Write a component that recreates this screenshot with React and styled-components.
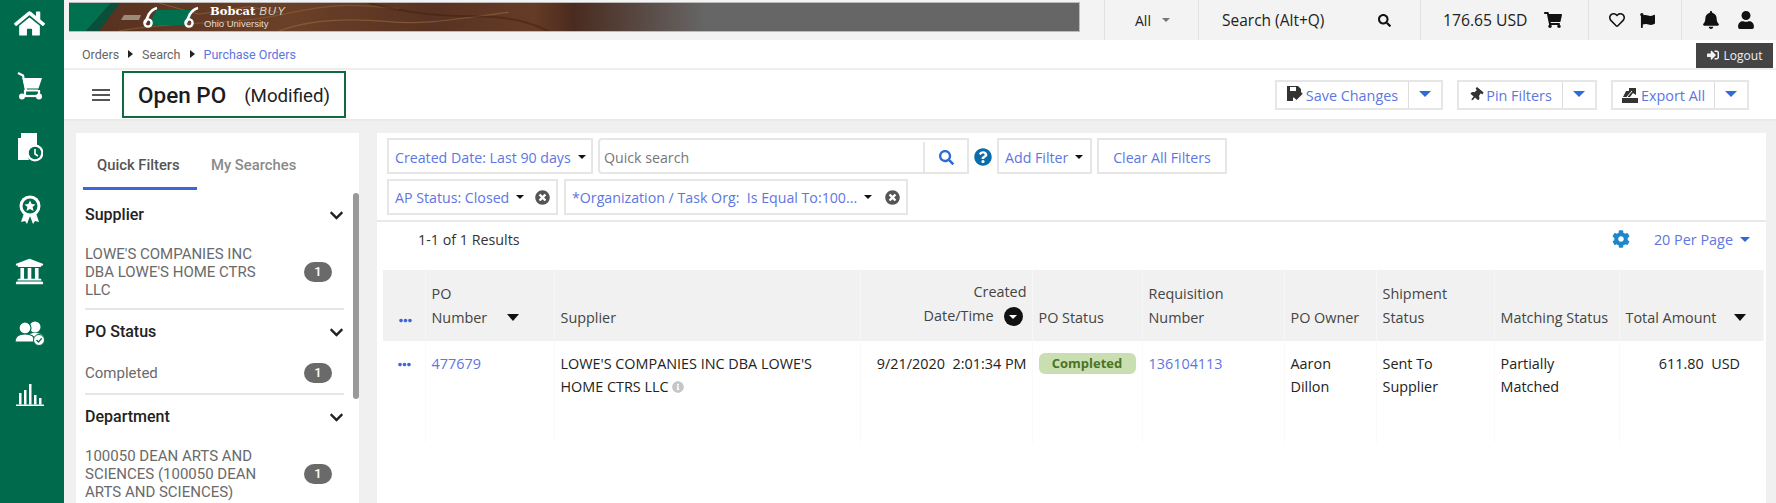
import React from 'react';
import styled, { createGlobalStyle } from 'styled-components';
import {
  FaHome,
  FaUniversity,
  FaSearch,
  FaShoppingCart,
  FaRegHeart,
  FaFlag,
  FaBell,
  FaUser,
  FaSignInAlt,
  FaThumbtack,
  FaCog,
  FaQuestionCircle,
  FaTimesCircle,
  FaInfoCircle,
  FaChevronDown,
  FaEllipsisH,
} from 'react-icons/fa';

const LINK = '#5d76e2';
const GREEN = '#006a4d';

const GlobalStyle = createGlobalStyle`
  html, body {
    margin: 0;
    height: 100%;
    overflow: hidden;
    background: #f0f0f0;
    font-family: "Open Sans", "Liberation Sans", sans-serif;
    color: #333;
  }
  * { box-sizing: border-box; }
`;

const CartIcon = () => (
  <svg width='25' height='29' viewBox='0 0 25 29'>
    <path d='M1 2l5 2.5 3 15h12' stroke='#fff' strokeWidth='2.2' fill='none' />
    <path d='M5.5 7H25l-3.5 10.5H8z' fill='#fff' />
    <path d='M8 19l0 7M22 19l0 7' stroke='#fff' strokeWidth='2.2' />
    <path d='M5 25h18' stroke='#fff' strokeWidth='2.2' />
    <circle cx='5' cy='25.5' r='3' fill='#fff' />
    <circle cx='22' cy='25.5' r='3' fill='#fff' />
  </svg>
);

const DocClockIcon = () => (
  <svg width='26' height='29' viewBox='0 0 26 29'>
    <path d='M4 0h16v14a9 9 0 0 0-8 13H1V5h3z' fill='#fff' />
    <circle cx='18' cy='20' r='8.5' fill='#fff' />
    <circle cx='18' cy='20' r='6.2' fill={GREEN} />
    <path d='M18 16v5l3 2' stroke='#fff' strokeWidth='1.6' fill='none' />
  </svg>
);

const AwardIcon = () => (
  <svg width='22' height='29' viewBox='0 0 22 29'>
    <path d='M5 18l-3 9 4-1 2 3 3-8 3 8 2-3 4 1-3-9z' fill='#fff' />
    <circle cx='11' cy='11' r='10.5' fill='#fff' />
    <circle cx='11' cy='11' r='7.5' fill={GREEN} />
    <path d='M11 5.5l1.7 3.6 3.8.4-2.9 2.6.9 3.9-3.5-2-3.5 2 .9-3.9-2.9-2.6 3.8-.4z' fill='#fff' />
  </svg>
);

const UsersCheckIcon = () => (
  <svg width='30' height='26' viewBox='0 0 30 26'>
    <circle cx='20' cy='7' r='5.5' fill='#fff' />
    <path d='M11 20c0-5 4-7 9-7s9 2 9 6v1z' fill='#fff' />
    <circle cx='10' cy='8' r='6' fill='#fff' stroke={GREEN} strokeWidth='1.2' />
    <path d='M0 22c0-6 4-8 10-8s10 2 10 8z' fill='#fff' stroke={GREEN} strokeWidth='1.2' />
    <circle cx='24' cy='20' r='5.5' fill='#fff' stroke={GREEN} strokeWidth='1' />
    <path d='M21.5 20l2 2 3.2-3.6' stroke={GREEN} strokeWidth='1.4' fill='none' />
  </svg>
);

const BarsIcon = () => (
  <svg width='28' height='22' viewBox='0 0 28 22'>
    <path d='M0 20.5h28V22H0z' fill='#fff' />
    <path d='M3 9h2.5v11.5H3zM8 6h2.5v14.5H8zM13 0h2.5v20.5H13zM18 11h2.5v9.5H18zM23 14h2.5v6.5H23z' fill='#fff' />
  </svg>
);

const SaveIcon = () => (
  <svg width='16' height='17' viewBox='0 0 16 17'>
    <path d='M0 0h11l3 3v5l-5 5-2-2-1 1v3H0z' fill='#333' />
    <path d='M3 1h6v4H3z' fill='#fff' />
    <path d='M7 10l2.5 2.5L15 7' stroke='#333' strokeWidth='2' fill='none' />
  </svg>
);

const ExportIcon = () => (
  <svg width='16' height='17' viewBox='0 0 16 17'>
    <path d='M0 12h16v5H0z' fill='#333' />
    <path d='M1 11l3-6h3V2l7 0v7l-3-2-3 4z' fill='#333' />
    <path d='M5 11l5-6' stroke='#fff' strokeWidth='1' />
  </svg>
);

const BannerArt = () => (
  <ArtLayer viewBox='0 0 1011 30' preserveAspectRatio='none'>
    <path d='M50 30C110 18 160 25 215 12S290 2 330 6' stroke='#8a5a34' strokeWidth='1.4' fill='none' opacity='.65' />
    <path d='M210 30c30-12 70-14 110-10s70-4 120-10' stroke='#9a6a3c' strokeWidth='1.2' fill='none' opacity='.6' />
    <path d='M300 0c30 8 60 14 100 14s60 6 80 16' stroke='#3a1c10' strokeWidth='2' fill='none' opacity='.45' />
    <path d='M90 0l40 12 50-8 30 6' stroke='#a7773f' strokeWidth='1' fill='none' opacity='.55' />
    <path d='M0 0h42L17 30H0z' fill='#00704f' />
    <path d='M42 0h9L30 30H17z' fill='#0a4f3a' />
  </ArtLayer>
);

const BobcatMark = () => (
  <MarkSvg width='88' height='24' viewBox='0 0 88 24'>
    <path d='M3 10h17l-2 5H0z' fill='#9a8a78' />
    <path d='M35 5h38l-8 15H28z' fill='#00704f' />
    <path d='M36 3c-4 1-6 3-8 6l-4 9' stroke='#fff' strokeWidth='2.6' fill='none' />
    <circle cx='27' cy='18' r='3.6' stroke='#fff' strokeWidth='2.4' fill='none' />
    <path d='M77 3c-4 1-6 3-8 6l-4 9' stroke='#fff' strokeWidth='2.6' fill='none' />
    <circle cx='68' cy='18' r='3.6' stroke='#fff' strokeWidth='2.4' fill='none' />
  </MarkSvg>
);

const navIcons = [
  <FaHome key='home' size={31} />,
  <CartIcon key='cart' />,
  <DocClockIcon key='doc' />,
  <AwardIcon key='award' />,
  <FaUniversity key='bank' size={29} />,
  <UsersCheckIcon key='users' />,
  <BarsIcon key='bars' />,
];

const filterGroups = [
  { title: 'Supplier', lines: ["LOWE'S COMPANIES INC", "DBA LOWE'S HOME CTRS", 'LLC'] },
  { title: 'PO Status', lines: ['Completed'] },
  { title: 'Department', lines: ['100050 DEAN ARTS AND', 'SCIENCES (100050 DEAN', 'ARTS AND SCIENCES)'] },
];

const App = () => {
  return (
    <Page>
      <GlobalStyle />
      <Nav>
        {navIcons.map(icon => (
          <NavItem key={icon.key}>{icon}</NavItem>
        ))}
      </Nav>
      <Main>
        <TopBar>
          <Banner>
            <BannerArt />
            <BobcatMark />
            <BrandText>
              <BrandName>
                Bobcat <BrandBuy>BUY</BrandBuy>
              </BrandName>
              <BrandSub>Ohio University</BrandSub>
            </BrandText>
          </Banner>
          <TopSegment $w={94} $pad={30}>
            <AllLabel>All</AllLabel> <Caret $size={4} $color='#777' />
          </TopSegment>
          <TopSegment $w={222} $pad={23} $between>
            <SearchLabel>Search (Alt+Q)</SearchLabel>
            <SearchGlyph size={13} />
          </TopSegment>
          <TopSegment $w={168} $pad={22}>
            <TopAmount>176.65 USD</TopAmount>
            <FaShoppingCart size={18} />
          </TopSegment>
          <TopSegment $w={93} $pad={20} $gap={15}>
            <FaRegHeart size={16} />
            <FaFlag size={15} />
          </TopSegment>
          <TopSegment $w={95} $pad={20} $gap={17}>
            <FaBell size={18} />
            <FaUser size={18} />
          </TopSegment>
        </TopBar>

        <CrumbBar>
          <Crumbs>
            <span>Orders</span>
            <CrumbArrow />
            <span>Search</span>
            <CrumbArrow />
            <CrumbLink>Purchase Orders</CrumbLink>
          </Crumbs>
          <LogoutButton>
            <FaSignInAlt size={12} /> Logout
          </LogoutButton>
        </CrumbBar>

        <TitleBar>
          <TitleLeft>
            <Hamburger>
              <span />
              <span />
              <span />
            </Hamburger>
            <TitleBox>
              <Title>Open PO</Title>
              <Modified>(Modified)</Modified>
            </TitleBox>
          </TitleLeft>
          <Actions>
            <SplitButton>
              <SplitMain $w={132}>
                <SaveIcon />
                Save Changes
              </SplitMain>
              <SplitToggle><Caret $size={6} $color='#2d6bd6' /></SplitToggle>
            </SplitButton>
            <SplitButton>
              <SplitMain $w={104}>
                <PinIcon size={14} />
                Pin Filters
              </SplitMain>
              <SplitToggle><Caret $size={6} $color='#2d6bd6' /></SplitToggle>
            </SplitButton>
            <SplitButton>
              <SplitMain $w={102}>
                <ExportIcon />
                Export All
              </SplitMain>
              <SplitToggle><Caret $size={6} $color='#2d6bd6' /></SplitToggle>
            </SplitButton>
          </Actions>
        </TitleBar>

        <Content>
          <SidePanel>
            <Tabs>
              <Tab $active>Quick Filters</Tab>
              <Tab>My Searches</Tab>
            </Tabs>
            <ScrollThumb />
            {filterGroups.map(group => (
              <FilterGroup key={group.title}>
                <GroupHead>
                  {group.title}
                  <FaChevronDown size={15} color='#222' />
                </GroupHead>
                <GroupRow $single={group.lines.length === 1}>
                  <GroupText>
                    {group.lines.map(line => (
                      <div key={line}>{line}</div>
                    ))}
                  </GroupText>
                  <CountBadge>1</CountBadge>
                </GroupRow>
              </FilterGroup>
            ))}
          </SidePanel>

          <ResultsPanel>
            <FilterBar>
              <FilterRow $first>
                <FilterBox $w={206}>
                  Created Date: Last 90 days <Caret $size={4} $color='#111' />
                </FilterBox>
                <SearchBox>
                  <SearchText>Quick search</SearchText>
                  <SearchButton><FaSearch size={15} color='#2d6bd6' /></SearchButton>
                </SearchBox>
                <HelpIcon><FaQuestionCircle size={18} color='#0b6cab' /></HelpIcon>
                <FilterBox $w={95}>
                  Add Filter <Caret $size={4} $color='#111' />
                </FilterBox>
                <FilterBox $w={130} $center>Clear All Filters</FilterBox>
              </FilterRow>
              <FilterRow>
                <FilterBox $w={171}>
                  AP Status: Closed <Caret $size={4} $color='#111' />
                  <RemoveIcon><FaTimesCircle size={15} /></RemoveIcon>
                </FilterBox>
                <FilterBox $w={344}>
                  *Organization / Task Org:&nbsp; Is Equal To:100... <Caret $size={4} $color='#111' />
                  <RemoveIcon><FaTimesCircle size={15} /></RemoveIcon>
                </FilterBox>
              </FilterRow>
            </FilterBar>

            <ResultsBar>
              <span>1-1 of 1 Results</span>
              <PageTools>
                <FaCog size={18} color='#1d87c9' />
                <PerPage>
                  20 Per Page <Caret $size={5.5} $color='#2d6bd6' />
                </PerPage>
              </PageTools>
            </ResultsBar>

            <Table>
              <colgroup>
                {[42, 129, 306, 172, 110, 142, 92, 118, 125, 144].map((w, i) => (
                  <Col key={i} $w={w} />
                ))}
              </colgroup>
              <thead>
                <tr>
                  <Th><Dots><FaEllipsisH size={13} /></Dots></Th>
                  <Th>
                    PO
                    <br />
                    Number <SortCaret />
                  </Th>
                  <Th>Supplier</Th>
                  <Th $right>
                    Created
                    <DateLine>
                      Date/Time
                      <SortCircle><Caret $size={4.5} $color='#fff' /></SortCircle>
                    </DateLine>
                  </Th>
                  <Th>PO Status</Th>
                  <Th>Requisition<br />Number</Th>
                  <Th>PO Owner</Th>
                  <Th>Shipment<br />Status</Th>
                  <Th>Matching Status</Th>
                  <Th>Total Amount <TotalCaret /></Th>
                </tr>
              </thead>
              <tbody>
                <tr>
                  <Td><Dots><FaEllipsisH size={13} /></Dots></Td>
                  <Td><Link>477679</Link></Td>
                  <Td>
                    LOWE'S COMPANIES INC DBA LOWE'S
                    <br />
                    HOME CTRS LLC <FaInfoCircle size={12} color='#c6c6c6' />
                  </Td>
                  <Td $right>9/21/2020&nbsp; 2:01:34 PM</Td>
                  <Td><StatusPill>Completed</StatusPill></Td>
                  <Td><Link>136104113</Link></Td>
                  <Td>Aaron<br />Dillon</Td>
                  <Td>Sent To<br />Supplier</Td>
                  <Td>Partially<br />Matched</Td>
                  <AmountCell>611.80&nbsp; USD</AmountCell>
                </tr>
              </tbody>
            </Table>
          </ResultsPanel>
        </Content>
      </Main>
    </Page>
  );
};

const Page = styled.div`
  display: flex;
  width: 1776px;
  height: 503px;
  overflow: hidden;
`;

const Nav = styled.nav`
  flex: 0 0 64px;
  background: ${GREEN};
  color: #fff;
  display: flex;
  flex-direction: column;
  padding: 0 5px 0 0;
`;

const NavItem = styled.div`
  height: 62px;
  flex: none;
  display: flex;
  align-items: center;
  justify-content: center;
  &:first-child { margin-top: -8px; }
`;

const Main = styled.div`
  flex: 1;
  min-width: 0;
  display: flex;
  flex-direction: column;
`;

const TopBar = styled.header`
  height: 40px;
  flex: none;
  background: #f3f3f3;
  display: flex;
  padding-left: 5px;
  font-size: 13px;
  color: #333;
`;

const Banner = styled.div`
  position: relative;
  width: 1011px;
  height: 30px;
  margin: 2px 24px 0 0;
  flex: none;
  overflow: hidden;
  display: flex;
  align-items: center;
  gap: 8px;
  padding-left: 52px;
  border: 1px solid #bbb;
  border-left: none;
  background: linear-gradient(90deg, #55301f 0, #6a4028 22%, #583222 36%, #653b26 46%, #4a2b1f 50%, #666 63%, #666 100%);
`;

const ArtLayer = styled.svg`
  position: absolute;
  inset: 0;
  width: 100%;
  height: 100%;
`;

const MarkSvg = styled.svg`
  position: relative;
  flex: none;
`;

const BrandText = styled.div`
  position: relative;
  color: #fff;
  margin-left: -7px;
  line-height: 1;
`;

const BrandName = styled.div`
  font-family: "DejaVu Serif", serif;
  font-size: 11.5px;
  font-weight: 700;
`;

const BrandBuy = styled.span`
  font-family: "Liberation Sans", sans-serif;
  font-style: italic;
  font-weight: 400;
  letter-spacing: 1px;
  color: #d9d3cb;
`;

const BrandSub = styled.div`
  font-family: "Liberation Sans", sans-serif;
  font-size: 9.5px;
  margin: 1px 0 0 -6px;
  color: #e2ddd6;
`;

const TopSegment = styled.div`
  width: ${p => p.$w}px;
  flex: none;
  border-left: 1px solid #e2e2e2;
  padding: 0 ${p => p.$pad}px;
  display: flex;
  align-items: center;
  justify-content: ${p => (p.$between ? 'space-between' : 'flex-start')};
  gap: ${p => p.$gap || 8}px;
  color: #222;
  svg { color: #111; flex: none; }
`;

const AllLabel = styled.span`
  font-size: 14px;
`;

const SearchLabel = styled.span`
  font-size: 15.5px;
  white-space: nowrap;
`;

const SearchGlyph = styled(FaSearch)`
  margin-right: 6px;
`;

const TopAmount = styled.span`
  font-size: 15.7px;
  margin-right: 9px;
  white-space: nowrap;
`;

const Caret = styled.span`
  display: inline-block;
  flex: none;
  width: 0;
  height: 0;
  vertical-align: middle;
  border-left: ${p => p.$size}px solid transparent;
  border-right: ${p => p.$size}px solid transparent;
  border-top: ${p => p.$size}px solid ${p => p.$color};
  margin-left: 3px;
`;

const CrumbBar = styled.div`
  height: 30px;
  flex: none;
  background: #fff;
  border-bottom: 2px solid #eee;
  display: flex;
  align-items: center;
  justify-content: space-between;
  padding: 0 3px 0 18px;
`;

const Crumbs = styled.div`
  display: flex;
  align-items: center;
  gap: 9px;
  font-family: Roboto, sans-serif;
  font-size: 12.5px;
  color: #666;
`;

const CrumbArrow = styled.span`
  width: 0;
  height: 0;
  border-top: 4px solid transparent;
  border-bottom: 4px solid transparent;
  border-left: 5px solid #222;
`;

const CrumbLink = styled.span`
  color: ${LINK};
`;

const LogoutButton = styled.div`
  width: 77px;
  height: 25px;
  margin-top: 2px;
  background: #444;
  color: #f2f2f2;
  font-size: 12px;
  display: flex;
  align-items: center;
  justify-content: center;
  gap: 5px;
`;

const TitleBar = styled.div`
  height: 51px;
  flex: none;
  background: #fff;
  border-bottom: 2px solid #eaeaea;
  display: flex;
  align-items: center;
  justify-content: space-between;
  padding: 0 27px 0 28px;
`;

const TitleLeft = styled.div`
  display: flex;
  align-items: center;
  gap: 12px;
`;

const Hamburger = styled.div`
  width: 18px;
  display: flex;
  flex-direction: column;
  gap: 3px;
  span {
    height: 2px;
    background: #555;
  }
`;

const TitleBox = styled.div`
  width: 224px;
  height: 47px;
  border: 2px solid #0f6b3f;
  display: flex;
  align-items: center;
  padding-left: 14px;
  gap: 18px;
  font-family: Roboto, sans-serif;
`;

const Title = styled.h1`
  margin: 0;
  font-size: 22.5px;
  font-weight: 500;
  color: #1c1c1c;
`;

const Modified = styled.span`
  margin-top: 3px;
  font-size: 18.7px;
  color: #222;
`;

const Actions = styled.div`
  display: flex;
  gap: 14px;
`;

const SplitButton = styled.div`
  height: 30px;
  display: flex;
  border: 2px solid #e6e6e6;
  background: #fff;
`;

const SplitMain = styled.div`
  width: ${p => p.$w}px;
  display: flex;
  align-items: center;
  justify-content: center;
  gap: 3px;
  padding-top: 2px;
  font-size: 14.4px;
  color: ${LINK};
  white-space: nowrap;
  border-right: 1px solid #ddd;
  svg { flex: none; margin-top: -2px; }
`;

const PinIcon = styled(FaThumbtack)`
  color: #333;
  transform: rotate(40deg);
`;

const SplitToggle = styled.div`
  width: 32px;
  display: flex;
  align-items: center;
  justify-content: center;
  span { margin: -2px 0 0; }
`;

const Content = styled.div`
  flex: 1;
  min-height: 0;
  display: flex;
  gap: 18px;
  padding: 12px 10px 0 12px;
  background: #f0f0f0;
`;

const SidePanel = styled.aside`
  position: relative;
  flex: 0 0 283px;
  background: #fff;
  padding: 0 15px 0 8px;
  font-family: Roboto, sans-serif;
  overflow: hidden;
`;

const ScrollThumb = styled.div`
  position: absolute;
  right: 0;
  top: 60px;
  width: 6px;
  height: 206px;
  border-radius: 3px;
  background: #999;
`;

const Tabs = styled.div`
  display: flex;
  height: 57px;
  margin-left: -1px;
`;

const Tab = styled.div`
  width: ${p => (p.$active ? '114px' : 'auto')};
  padding: 23px 0 0 14px;
  font-size: 14.8px;
  font-weight: 500;
  color: ${p => (p.$active ? '#555' : '#8a8a8a')};
  border-bottom: ${p => (p.$active ? '3px solid #3d66d8' : 'none')};
`;

const FilterGroup = styled.section`
  margin-left: 1px;
  padding-top: 12px;
  border-bottom: 2px solid #e6e6e6;
  &:first-of-type { padding-top: 15px; }
`;

const GroupHead = styled.div`
  display: flex;
  align-items: center;
  justify-content: space-between;
  font-size: 16px;
  font-weight: 500;
  line-height: 20px;
  color: #222;
  height: 20px;
`;

const GroupRow = styled.div`
  display: flex;
  align-items: center;
  justify-content: space-between;
  padding: ${p => (p.$single ? '21px 12px 10px 0' : '20px 12px 9px 0')};
`;

const GroupText = styled.div`
  font-size: 15px;
  line-height: 18px;
  color: #6a6a6a;
  white-space: nowrap;
`;

const CountBadge = styled.div`
  width: 28px;
  height: 20px;
  border-radius: 10px;
  background: #6a6a6a;
  color: #fff;
  font-size: 13px;
  font-weight: 500;
  text-align: center;
  line-height: 20px;
`;

const ResultsPanel = styled.main`
  flex: 1;
  min-width: 0;
  background: #fff;
`;

const FilterBar = styled.div`
  padding: 5px 10px 5px;
  border-bottom: 2px solid #e8e8e8;
  display: flex;
  flex-direction: column;
  gap: 5px;
`;

const FilterRow = styled.div`
  display: flex;
  align-items: stretch;
  gap: ${p => (p.$first ? 5 : 6)}px;
  & > div { padding-top: ${p => (p.$first ? 2 : 0)}px; }
`;

const FilterBox = styled.div`
  width: ${p => p.$w}px;
  height: 36px;
  flex: none;
  display: flex;
  align-items: center;
  justify-content: ${p => (p.$center ? 'center' : 'flex-start')};
  gap: 4px;
  padding: 0 6px;
  border: 2px solid #e6e6e6;
  font-size: 14.2px;
  color: ${LINK};
  white-space: nowrap;
`;

const RemoveIcon = styled.span`
  display: flex;
  margin-left: auto;
  color: #555;
`;

const SearchBox = styled.div`
  width: 371px;
  height: 36px;
  flex: none;
  display: flex;
  border: 2px solid #e6e6e6;
  border-radius: 4px 0 0 4px;
`;

const SearchText = styled.div`
  flex: 1;
  padding-left: 4px;
  font-size: 14.2px;
  line-height: 32px;
  color: #777;
`;

const SearchButton = styled.div`
  width: 44px;
  display: flex;
  align-items: center;
  justify-content: center;
  border-left: 2px solid #e6e6e6;
`;

const HelpIcon = styled.div`
  width: 18px;
  display: flex;
  align-items: center;
  justify-content: center;
`;

const ResultsBar = styled.div`
  height: 48px;
  display: flex;
  align-items: center;
  justify-content: space-between;
  padding: 0 16px 14px 41px;
  font-size: 14.3px;
  color: #333;
`;

const PageTools = styled.div`
  display: flex;
  align-items: center;
  gap: 24px;
`;

const PerPage = styled.div`
  display: flex;
  align-items: center;
  gap: 4px;
  font-size: 14.4px;
  color: ${LINK};
`;

const Table = styled.table`
  width: 1380px;
  margin-left: 6px;
  table-layout: fixed;
  border-collapse: collapse;
  font-size: 14.4px;
`;

const Col = styled.col`
  width: ${p => p.$w}px;
`;

const Th = styled.th`
  height: 71px;
  padding: 0 ${p => (p.$right ? 5 : 4)}px ${p => (p.$right ? 13 : 11)}px 6px;
  background: #f1f1f1;
  border-right: 1px solid #f7f7f7;
  font-weight: 400;
  line-height: 24px;
  color: #444;
  vertical-align: bottom;
  text-align: ${p => (p.$right ? 'right' : 'left')};
  white-space: nowrap;
`;

const Td = styled.td`
  height: 102px;
  padding: 11px 5px 0 6px;
  border-right: 1px solid #fafafa;
  line-height: 23px;
  color: #222;
  vertical-align: top;
  text-align: ${p => (p.$right ? 'right' : 'left')};
  white-space: nowrap;
  svg { vertical-align: -1px; }
`;

const AmountCell = styled(Td)`
  text-align: right;
  padding-right: 23px;
  border-right: none;
`;

const Dots = styled.span`
  display: block;
  text-align: center;
  padding-left: 1px;
  color: #3d66d8;
  line-height: 22px;
  svg { vertical-align: middle; }
`;

const SortCaret = styled.span`
  display: inline-block;
  width: 0;
  height: 0;
  margin-left: 16px;
  vertical-align: 2px;
  border-left: 6px solid transparent;
  border-right: 6px solid transparent;
  border-top: 7px solid #111;
`;

const TotalCaret = styled(SortCaret)`
  margin-left: 14px;
`;

const DateLine = styled.div`
  display: flex;
  align-items: center;
  justify-content: flex-end;
  gap: 10px;
  margin-right: 4px;
`;

const SortCircle = styled.span`
  width: 19px;
  height: 19px;
  border-radius: 50%;
  background: #111;
  display: flex;
  align-items: center;
  justify-content: center;
  span { margin: 2px 0 0; }
`;

const Link = styled.span`
  color: ${LINK};
`;

const StatusPill = styled.div`
  width: 97px;
  height: 21px;
  margin-top: 1px;
  border-radius: 6px;
  background: #c9dfb2;
  color: #4c7326;
  font-size: 13px;
  font-weight: 700;
  line-height: 20px;
  text-align: center;
`;

export default App;
